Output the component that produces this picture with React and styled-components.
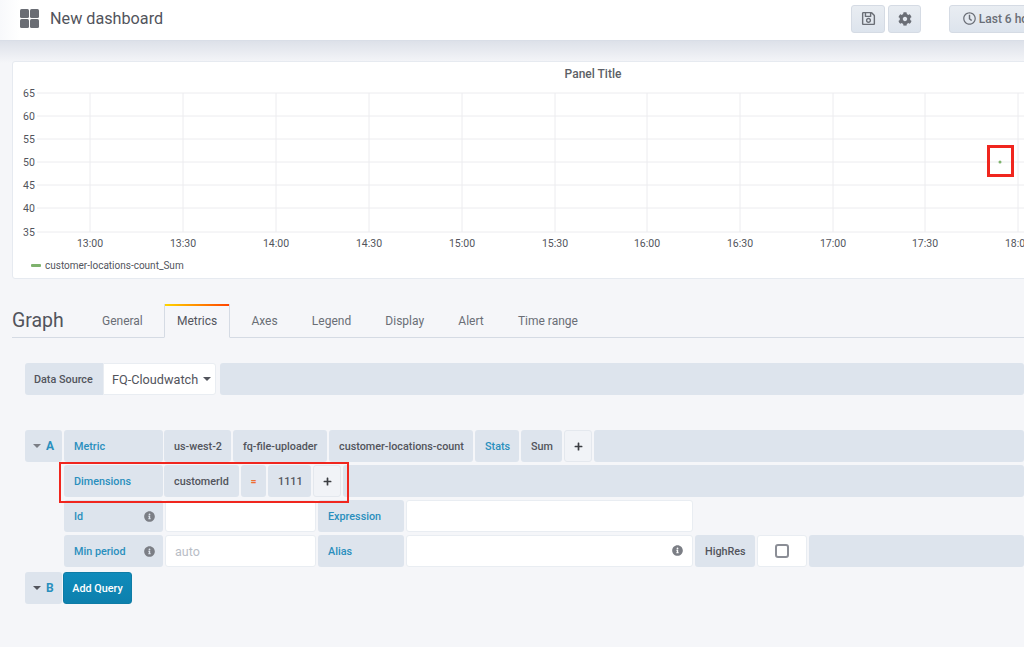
import styled, { createGlobalStyle } from 'styled-components';
import { FaRegSave, FaCog, FaRegClock, FaInfoCircle, FaPlus } from 'react-icons/fa';

const GlobalStyle = createGlobalStyle`
  html, body {
    margin: 0;
    padding: 0;
    background: #f5f6f9;
    font-family: Roboto, "Liberation Sans", sans-serif;
  }
`;

const Page = styled.div`
  position: relative;
  width: 1024px;
  height: 647px;
  overflow: hidden;
  background: #f5f6f9;
`;

const Navbar = styled.header`
  display: flex;
  align-items: center;
  height: 41px;
  box-sizing: border-box;
  padding: 0 0 3px 20px;
  background: linear-gradient(90deg, #f8f9fb, #fff 20px);
  border-bottom: 1px solid #d9dee7;
`;
const DashTitle = styled.h1`
  margin: 0 0 0 11px;
  font-size: 16.2px;
  font-weight: 400;
  color: #52545c;
`;
const Tools = styled.div`
  display: flex;
  gap: 3px;
  flex: none;
  width: 173px;
  margin-left: auto;
`;
const ToolBtn = styled.button`
  flex: none;
  display: flex;
  align-items: center;
  justify-content: center;
  gap: 3px;
  width: ${(p) => p.$w}px;
  height: 28px;
  margin-left: ${(p) => p.$gap || 0}px;
  padding: 0;
  border: 1px solid #d5dbe4;
  border-radius: 3px;
  background: linear-gradient(#e9edf2, #dde4ed);
  color: #6a6e76;
  font: 500 12px Roboto, sans-serif;
  white-space: nowrap;
`;

const Main = styled.main`
  padding: 20px 0 0 12px;
  background: linear-gradient(#dde1e9, #f5f6f9 22px) no-repeat;
`;
const Panel = styled.section`
  width: 1162px;
  height: 218px;
  box-sizing: border-box;
  background: #fff;
  border: 1px solid #e6eaf0;
  border-radius: 3px;
`;
const PanelTitle = styled.div`
  height: 23px;
  padding-top: 5px;
  box-sizing: border-box;
  text-align: center;
  font-size: 12px;
  font-weight: 500;
  color: #5c5f66;
`;
const Chart = styled.svg`
  display: block;
  width: 1160px;
  height: 170px;
  font-family: Roboto, sans-serif;
  font-size: 10.5px;
`;
const Legend = styled.div`
  display: flex;
  align-items: center;
  gap: 4px;
  margin-top: 5px;
  padding-left: 18px;
  font-size: 10px;
  color: #52545c;
`;
const LegendDash = styled.span`
  width: 10px;
  height: 3px;
  border-radius: 1px;
  background: #7eb26d;
`;

const TabBar = styled.nav`
  display: flex;
  align-items: flex-end;
  gap: 8.2px;
  height: 35px;
  box-sizing: border-box;
  margin-top: 24px;
  border-bottom: 1px solid #d5dbe4;
`;
const EditorName = styled.div`
  width: 68.8px;
  height: 34px;
  font-size: 19.5px;
  line-height: 36px;
  color: #52545c;
`;
const Tab = styled.div`
  height: 34px;
  box-sizing: border-box;
  padding: 2px 13px 0;
  margin-bottom: -1px;
  font-size: 12px;
  line-height: 31px;
  color: ${(p) => (p.$active ? '#52545c' : '#6a6e76')};
  ${(p) => p.$active && `
    border: solid #d5dbe4;
    border-width: 0 1px;
    padding: 2px 12px 0;
    border-bottom: 1px solid #f5f6f9;
    background: linear-gradient(90deg, #ffd500, #ff4400) top / 100% 2px no-repeat, #f5f6f9;
  `}
`;

const Editor = styled.div`
  padding: 25px 0 0 13px;
`;
const Row = styled.div`
  display: flex;
  gap: 2px;
  height: 32px;
  margin-bottom: ${(p) => p.$after ?? 3}px;
  margin-left: ${(p) => (p.$indent ? 39 : 0)}px;
`;
const Seg = styled.div`
  flex: none;
  display: flex;
  align-items: center;
  justify-content: space-between;
  width: ${(p) => p.$w}px;
  margin-right: ${(p) => p.$pull || 0}px;
  box-sizing: border-box;
  padding: 0 8px 0 10px;
  border-radius: 3px;
  background: #dde4ed;
  font-size: 10.8px;
  font-weight: 500;
  color: ${(p) => (p.$accent ? '#2a8fbd' : '#52545c')};
  white-space: nowrap;
`;
const SourceLabel = styled(Seg)`
  padding-left: 9px;
  border-radius: 3px 0 0 3px;
`;
const Filler = styled.div`
  flex: 1;
  border-radius: 3px;
  background: #dde4ed;
`;
const Select = styled.div`
  flex: none;
  display: flex;
  align-items: center;
  gap: 5px;
  width: 113px;
  margin: 0 2px 0 -2px;
  box-sizing: border-box;
  padding-left: 8px;
  border: 1px solid #e9edf2;
  border-radius: 0 3px 3px 0;
  background: #fff;
  font-size: 12.7px;
  color: #52545c;
`;
const Caret = styled.span`
  width: 0;
  height: 0;
  border: 4px solid transparent;
  border-top-color: ${(p) => p.$color || '#52545c'};
  border-bottom: 0;
`;
const Collapse = styled(Seg)`
  justify-content: flex-start;
  gap: 5px;
  padding: 0 0 0 8px;
  font-size: 12px;
  font-weight: 700;
`;
const PlusBtn = styled.div`
  flex: none;
  display: flex;
  align-items: center;
  justify-content: center;
  width: 28px;
  box-sizing: border-box;
  border: 1px solid #e4e8ee;
  border-radius: 3px;
  background: #f1f3f7;
  color: #3b3d42;
  font-size: 9px;
`;
const Eq = styled(Seg)`
  justify-content: center;
  padding: 0;
  color: #ee6e33;
  font-weight: 500;
`;
const Field = styled.div`
  position: relative;
  flex: none;
  display: flex;
  width: ${(p) => p.$w}px;
`;
const TextInput = styled.input`
  width: 100%;
  box-sizing: border-box;
  padding: 0 9px;
  border: 1px solid #e9edf2;
  border-radius: 3px;
  outline: none;
  background: #fff;
  font: 400 12.5px Roboto, sans-serif;
  color: #52545c;
  &::placeholder {
    color: #b9bdc6;
  }
`;
const FieldInfo = styled.span`
  position: absolute;
  top: 10px;
  right: 10px;
  display: flex;
  color: #7b7e85;
  font-size: 11px;
`;
const Info = styled.span`
  display: flex;
  color: #7b7e85;
  font-size: 11px;
`;
const CheckCell = styled.div`
  flex: none;
  display: flex;
  align-items: center;
  justify-content: center;
  width: 50px;
  box-sizing: border-box;
  border: 1px solid #e9edf2;
  border-radius: 3px;
  background: #fff;
`;
const CheckBox = styled.span`
  width: 14px;
  height: 14px;
  box-sizing: border-box;
  border: 2px solid #8b8e96;
  border-radius: 3px;
`;
const AddQuery = styled.button`
  flex: none;
  width: 69px;
  margin-left: -1px;
  padding: 0;
  border: 1px solid #0e7ca6;
  border-radius: 3px;
  background: linear-gradient(#0f8bbb, #0d80ad);
  color: #fff;
  font: 500 10.8px Roboto, sans-serif;
`;
const Callout = styled.div`
  position: absolute;
  left: ${(p) => p.$x}px;
  top: ${(p) => p.$y}px;
  width: ${(p) => p.$w}px;
  height: ${(p) => p.$h}px;
  box-sizing: border-box;
  border: ${(p) => p.$t}px solid #f0261e;
`;

const yTicks = [65, 60, 55, 50, 45, 40, 35];
const yPos = [8, 31, 54, 77, 100, 123, 147];
const xTicks = ['13:00', '13:30', '14:00', '14:30', '15:00', '15:30', '16:00', '16:30', '17:00', '17:30', '18:00'];
const xPos = [77, 170, 263, 356, 449, 542, 634, 727, 820, 912, 1005];

const GridIcon = () => (
  <svg width="19" height="19" viewBox="0 0 19 19" fill="#6a6d74">
    <rect x="0" y="0" width="9" height="9" rx="1.5" />
    <rect x="10" y="0" width="9" height="9" rx="1.5" />
    <rect x="0" y="10" width="9" height="9" rx="1.5" />
    <rect x="10" y="10" width="9" height="9" rx="1.5" />
  </svg>
);

export default function App() {
  return (
    <Page>
      <GlobalStyle />
      <Navbar>
        <GridIcon />
        <DashTitle>New dashboard</DashTitle>
        <Tools>
          <ToolBtn $w={34}><FaRegSave size={15} /></ToolBtn>
          <ToolBtn $w={33}><FaCog size={14} /></ToolBtn>
          <ToolBtn $w={110} $gap={25}><FaRegClock size={13} />Last 6 hours</ToolBtn>
        </Tools>
      </Navbar>
      <Main>
        <Panel>
          <PanelTitle>Panel Title</PanelTitle>
          <Chart viewBox="0 0 1160 170">
            {yPos.map((y, i) => (
              <g key={y}>
                <line x1="24" x2="1160" y1={y} y2={y} stroke="#ececef" />
                <text x="10" y={y + 4} fill="#52545c">{yTicks[i]}</text>
              </g>
            ))}
            {xPos.map((x, i) => (
              <g key={x}>
                <line x1={x} x2={x} y1="8" y2="147" stroke="#ececef" />
                <text x={x} y="162" fill="#52545c" textAnchor="middle">{xTicks[i]}</text>
              </g>
            ))}
            <circle cx="987" cy="77" r="1.5" fill="#7eb26d" />
          </Chart>
          <Legend><LegendDash />customer-locations-count_Sum</Legend>
        </Panel>
        <TabBar>
          <EditorName>Graph</EditorName>
          <Tab>General</Tab>
          <Tab $active>Metrics</Tab>
          <Tab>Axes</Tab>
          <Tab>Legend</Tab>
          <Tab>Display</Tab>
          <Tab>Alert</Tab>
          <Tab>Time range</Tab>
        </TabBar>
        <Editor>
          <Row $after={35}>
            <SourceLabel $w={78}>Data Source</SourceLabel>
            <Select>FQ-Cloudwatch<Caret /></Select>
            <Filler />
          </Row>
          <Row>
            <Collapse $w={37} $accent><Caret $color="#7b7e85" />A</Collapse>
            <Seg $w={99} $accent $pull={-1}>Metric</Seg>
            <Seg $w={67}>us-west-2</Seg>
            <Seg $w={94}>fq-file-uploader</Seg>
            <Seg $w={144}>customer-locations-count</Seg>
            <Seg $w={44} $accent>Stats</Seg>
            <Seg $w={41}>Sum</Seg>
            <PlusBtn><FaPlus /></PlusBtn>
            <Filler />
          </Row>
          <Row $indent>
            <Seg $w={99} $accent $pull={-1}>Dimensions</Seg>
            <Seg $w={75}>customerId</Seg>
            <Eq $w={25}>=</Eq>
            <Seg $w={43}>1111</Seg>
            <PlusBtn><FaPlus /></PlusBtn>
            <Filler />
          </Row>
          <Row $indent>
            <Seg $w={99} $accent>Id<Info><FaInfoCircle /></Info></Seg>
            <Field $w={151}><TextInput /></Field>
            <Seg $w={86} $accent>Expression</Seg>
            <Field $w={287}><TextInput /></Field>
          </Row>
          <Row $indent $after={5}>
            <Seg $w={99} $accent>Min period<Info><FaInfoCircle /></Info></Seg>
            <Field $w={151}><TextInput placeholder="auto" /></Field>
            <Seg $w={86} $accent>Alias</Seg>
            <Field $w={287}>
              <TextInput />
              <FieldInfo><FaInfoCircle /></FieldInfo>
            </Field>
            <Seg $w={60}>HighRes</Seg>
            <CheckCell><CheckBox /></CheckCell>
            <Filler />
          </Row>
          <Row>
            <Collapse $w={37} $accent><Caret />B</Collapse>
            <AddQuery>Add Query</AddQuery>
          </Row>
        </Editor>
      </Main>
      <Callout $x={987} $y={145} $w={27} $h={32} $t={3} />
      <Callout $x={59} $y={462} $w={290} $h={41} $t={2} />
    </Page>
  );
}
